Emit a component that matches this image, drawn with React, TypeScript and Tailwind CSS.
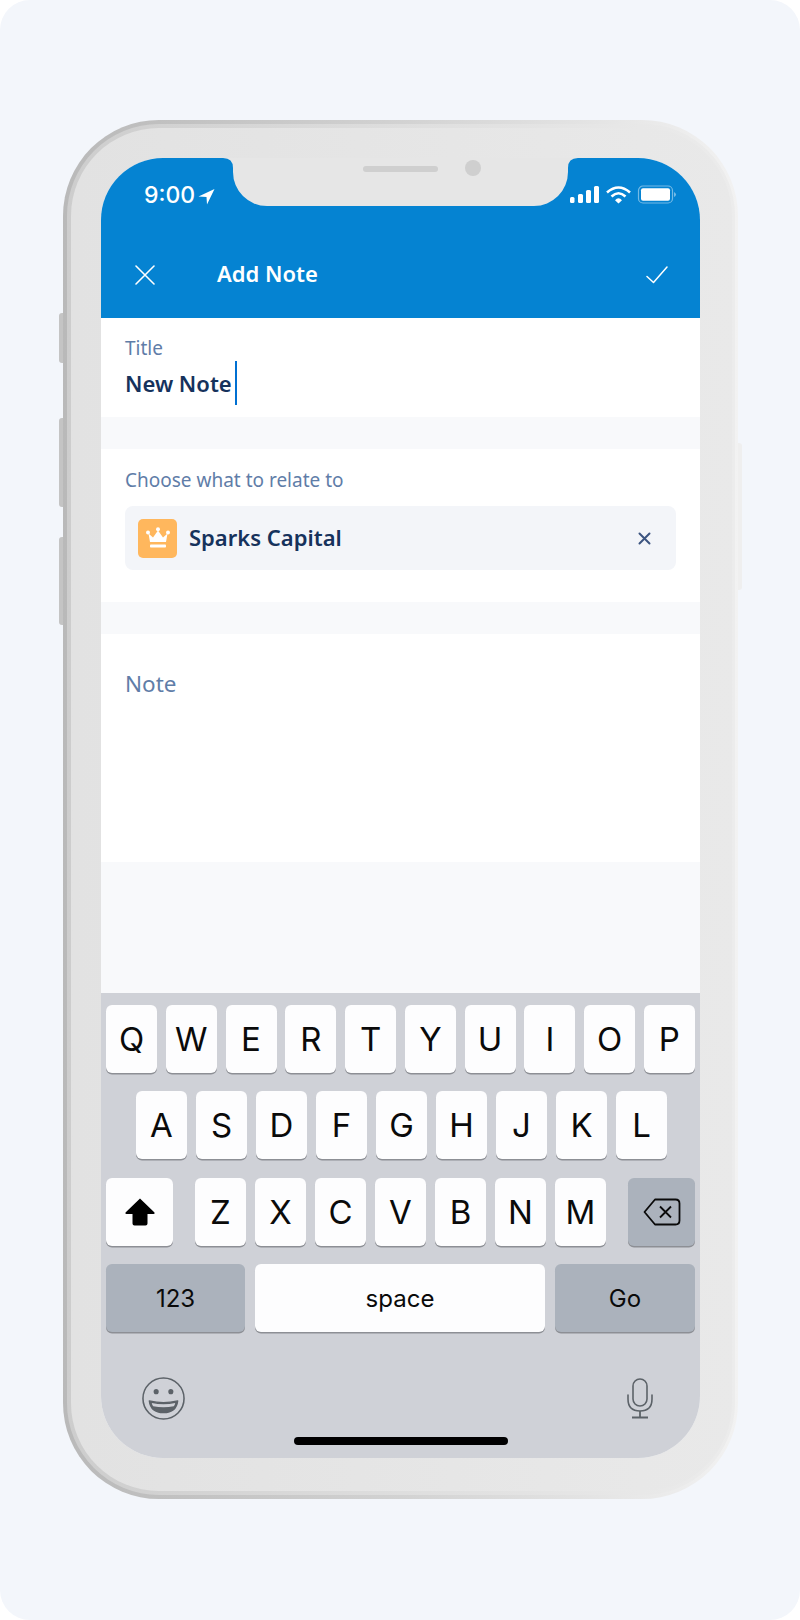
import React from "react";

const sans = "font-['Noto_Sans',sans-serif]";

function Key({ label }: { label: string }) {
  return (
    <div className="w-[51px] h-[68px] pt-[1px] rounded-[6px] bg-[#fdfdfe] shadow-[0_1.5px_0_#8d8f95] flex items-center justify-center font-['Inter',sans-serif] text-[33px] leading-none text-[#0a0a0a]">
      {label}
    </div>
  );
}

function Notch() {
  return (
    <svg className="absolute left-0 top-0" width="599" height="50" viewBox="0 0 599 50">
      <path
        d="M122 0Q132 0 132 10V14A34 34 0 0 0 166 48H433A34 34 0 0 0 467 14V10Q467 0 477 0Z"
        fill="#e6e6e6"
      />
      <rect x="262" y="8" width="75" height="6" rx="3" fill="#cfcfcf" />
      <circle cx="372" cy="10" r="8" fill="#cfcfcf" />
    </svg>
  );
}

function StatusIcons() {
  return (
    <svg width="110" height="20" viewBox="0 0 110 20">
      <rect x="0" y="12" width="4.5" height="6" rx="1.5" fill="#fff" />
      <rect x="8" y="9" width="5" height="9" rx="1.5" fill="#fff" />
      <rect x="16" y="5" width="5" height="13" rx="1.5" fill="#fff" />
      <rect x="24" y="1" width="5" height="17" rx="1.5" fill="#fff" />
      <path d="M37 7.5Q48.5 -2.5 60 7.5" fill="none" stroke="#fff" strokeWidth="2.6" />
      <path d="M41.5 11.5Q48.5 5 55.5 11.5" fill="none" stroke="#fff" strokeWidth="2.6" />
      <path d="M45 15.2Q48.5 11.5 52 15.2L48.5 18.6Z" fill="#fff" />
      <rect x="68.5" y="1" width="34" height="17" rx="4.5" fill="none" stroke="#ffffff" strokeOpacity="0.45" strokeWidth="1.2" />
      <rect x="71" y="3.2" width="29" height="12.6" rx="2" fill="#fff" />
      <path d="M104 7V12Q106 11 106 9.5Q106 8 104 7Z" fill="#ffffff" fillOpacity="0.45" />
    </svg>
  );
}

export default function App() {
  return (
    <div className="w-[800px] h-[1620px] bg-white">
      <div className="relative w-[800px] h-[1620px] rounded-[30px] bg-[#f3f6fb] pt-[120px] pl-[63px]">
        <div className="relative w-[675px] h-[1379px]">
          {/* side buttons */}
          <div className="absolute left-[-4px] top-[193px] w-[6px] h-[50px] rounded-l-[3px] bg-[#c4c4c4]" />
          <div className="absolute left-[-4px] top-[298px] w-[6px] h-[89px] rounded-l-[3px] bg-[#c4c4c4]" />
          <div className="absolute left-[-4px] top-[417px] w-[6px] h-[88px] rounded-l-[3px] bg-[#c4c4c4]" />
          <div className="absolute right-[-4px] top-[323px] w-[6px] h-[147px] rounded-r-[3px] bg-[#efefef]" />

          <div className="relative w-full h-full rounded-[96px] bg-gradient-to-r from-[#b9b9b9] via-[#d2d2d2] to-[#f2f2f2] pt-[4px] pl-[4px] pr-[3px] pb-[4px]">
            <div className="w-full h-full rounded-[92px] bg-gradient-to-r from-[#cdcdcd] via-[#dedede] to-[#ececec] pt-[4px] pl-[4px] pr-[3px] pb-[4px]">
              <div className="w-full h-full rounded-[88px] bg-gradient-to-r from-[#e2e2e2] to-[#e9e9e9] pt-[30px] pl-[30px] pr-[32px] pb-[33px]">
                {/* screen */}
                <div className={`relative w-[599px] h-[1300px] rounded-[62px] overflow-hidden bg-[#f8f9fb] flex flex-col ${sans}`}>
                  <header className="relative h-[160px] shrink-0 bg-[#0583d2] text-white">
                    <Notch />
                    <div className="h-[73px] pt-[24px] pl-[43px] pr-[20px] flex items-start justify-between">
                      <div className="flex items-center gap-[3px] font-['Inter',sans-serif] text-[23px] leading-[26px] font-medium">
                        <span>9:00</span>
                        <svg width="17" height="17" viewBox="0 0 17 17" className="mt-[3px]">
                          <path d="M16.5 1L0.5 8.5L8.5 9L9 16.5Z" fill="#fff" />
                        </svg>
                      </div>
                      <div className="pt-[3px]">
                        <StatusIcons />
                      </div>
                    </div>
                    <div className="h-[87px] pl-[34px] pr-[32px] flex items-center">
                      <svg width="20" height="20" viewBox="0 0 20 20" className="shrink-0">
                        <path d="M1 1L19 19M19 1L1 19" stroke="#fff" strokeWidth="1.6" strokeLinecap="round" />
                      </svg>
                      <span className="ml-[62px] -mt-[4px] text-[22px] font-semibold leading-none">Add Note</span>
                      <svg width="22" height="18" viewBox="0 0 22 18" className="ml-auto">
                        <path d="M1 10.5L7.5 16.5L21 1" fill="none" stroke="#fff" strokeWidth="1.5" strokeLinecap="round" strokeLinejoin="round" />
                      </svg>
                    </div>
                  </header>

                  <section className="h-[99px] shrink-0 bg-white pl-[24px] pt-[18px]">
                    <div className="text-[19px] leading-[24px] text-[#5f7da8]">Title</div>
                    <div className="mt-[1px] flex items-center h-[44px]">
                      <span className="text-[22px] font-semibold leading-none text-[#16325c]">New Note</span>
                      <span className="ml-[3px] w-[2px] h-[44px] bg-[#0070d2]" />
                    </div>
                  </section>

                  <div className="h-[32px] shrink-0" />

                  <section className="h-[153px] shrink-0 bg-white px-[24px] pt-[19px]">
                    <div className="text-[19px] leading-[24px] text-[#5f7da8]">Choose what to relate to</div>
                    <div className="mt-[14px] h-[64px] rounded-[8px] bg-[#f3f5f9] pl-[13px] pr-[25px] flex items-center">
                      <div className="w-[39px] h-[39px] rounded-[5px] bg-[#ffb75d] flex items-center justify-center">
                        <svg width="24" height="22" viewBox="0 0 24 22">
                          <circle cx="12" cy="2.2" r="2" fill="#fff" />
                          <circle cx="2" cy="5.5" r="2" fill="#fff" />
                          <circle cx="22" cy="5.5" r="2" fill="#fff" />
                          <path d="M2.5 6.5L7 10.5L12 3.5L17 10.5L21.5 6.5L20 15H4Z" fill="#fff" />
                          <rect x="4" y="17.5" width="16" height="3" rx="0.8" fill="#fff" />
                        </svg>
                      </div>
                      <span className="ml-[12px] -mt-[2px] text-[22px] font-semibold leading-none text-[#16325c]">Sparks Capital</span>
                      <svg width="13" height="13" viewBox="0 0 13 13" className="ml-auto">
                        <path d="M1.5 1.5L11.5 11.5M11.5 1.5L1.5 11.5" stroke="#3c5580" strokeWidth="2" strokeLinecap="round" />
                      </svg>
                    </div>
                  </section>

                  <div className="h-[32px] shrink-0" />

                  <section className="h-[228px] shrink-0 bg-white pl-[24px] pt-[35px]">
                    <div className="text-[22.5px] leading-[30px] text-[#5f7da8]">Note</div>
                  </section>

                  <div className="h-[131px] shrink-0" />

                  {/* keyboard */}
                  <div className="h-[465px] shrink-0 bg-[#cfd1d7] px-[5px] pt-[12px]">
                    <div className="flex justify-between">
                      {"QWERTYUIOP".split("").map((k) => (
                        <Key key={k} label={k} />
                      ))}
                    </div>
                    <div className="mt-[18px] pl-[30px] flex gap-[9px]">
                      {"ASDFGHJKL".split("").map((k) => (
                        <Key key={k} label={k} />
                      ))}
                    </div>
                    <div className="mt-[19px] flex justify-between">
                      <div className="w-[67px] h-[68px] rounded-[6px] bg-[#fdfdfe] shadow-[0_1.5px_0_#8d8f95] flex items-center justify-center">
                        <svg width="30" height="28" viewBox="0 0 30 28">
                          <path d="M15 0.5L29.5 14.5Q30 16 28.5 16H22.5V25.5Q22.5 27.5 20.5 27.5H9.5Q7.5 27.5 7.5 25.5V16H1.5Q0 16 0.5 14.5Z" fill="#000" />
                        </svg>
                      </div>
                      <div className="flex gap-[9px]">
                        {"ZXCVBNM".split("").map((k) => (
                          <Key key={k} label={k} />
                        ))}
                      </div>
                      <div className="w-[67px] h-[68px] rounded-[6px] bg-[#abb2bc] shadow-[0_1.5px_0_#8d8f95] flex items-center justify-center">
                        <svg width="38" height="28" viewBox="0 0 38 28">
                          <path d="M12 1.5H32.5Q36.5 1.5 36.5 5.5V22.5Q36.5 26.5 32.5 26.5H12L1.5 14Z" fill="none" stroke="#0a0a0a" strokeWidth="1.8" strokeLinejoin="round" />
                          <path d="M17 8.5L28 19.5M28 8.5L17 19.5" stroke="#0a0a0a" strokeWidth="1.8" />
                        </svg>
                      </div>
                    </div>
                    <div className="mt-[18px] flex gap-[10px] font-['Inter',sans-serif] text-[24px] leading-none text-[#0a0a0a]">
                      <div className="w-[139px] h-[68px] pt-[1px] rounded-[6px] bg-[#abb2bc] shadow-[0_1.5px_0_#8d8f95] flex items-center justify-center">123</div>
                      <div className="w-[290px] h-[68px] pt-[1px] rounded-[6px] bg-[#fdfdfe] shadow-[0_1.5px_0_#8d8f95] flex items-center justify-center">space</div>
                      <div className="w-[140px] h-[68px] pt-[1px] rounded-[6px] bg-[#abb2bc] shadow-[0_1.5px_0_#8d8f95] flex items-center justify-center">Go</div>
                    </div>
                    <div className="mt-[44px] pl-[35px] pr-[42px] flex items-center justify-between">
                      <svg width="45" height="45" viewBox="0 0 46 46">
                        <circle cx="23" cy="23" r="21" fill="none" stroke="#5c6268" strokeWidth="1.6" />
                        <circle cx="15.5" cy="16" r="2.6" fill="#5c6268" />
                        <circle cx="30.5" cy="16" r="2.6" fill="#5c6268" />
                        <path d="M8.5 25.5Q23 29 37.5 25.5Q36 37.5 23 37.5Q10 37.5 8.5 25.5Z" fill="#5c6268" stroke="#5c6268" strokeWidth="1.4" strokeLinejoin="round" />
                        <path d="M11 27.5Q23 30.5 35 27.5Q34.5 30 33.5 31Q23 33 12.5 31Q11.5 30 11 27.5Z" fill="#cfd1d7" />
                      </svg>
                      <svg width="26" height="41" viewBox="0 0 26 41">
                        <rect x="6" y="1" width="14" height="27" rx="7" fill="none" stroke="#5c6268" strokeWidth="1.6" />
                        <path d="M1 17V21Q1 33 13 33Q25 33 25 21V17" fill="none" stroke="#5c6268" strokeWidth="1.6" strokeLinecap="round" />
                        <path d="M13 33V39M5 39.5H21" fill="none" stroke="#5c6268" strokeWidth="1.8" />
                      </svg>
                    </div>
                    <div className="absolute left-[193px] bottom-[13px] w-[214px] h-[8px] rounded-full bg-black" />
                  </div>
                </div>
              </div>
            </div>
          </div>
        </div>
      </div>
    </div>
  );
}
